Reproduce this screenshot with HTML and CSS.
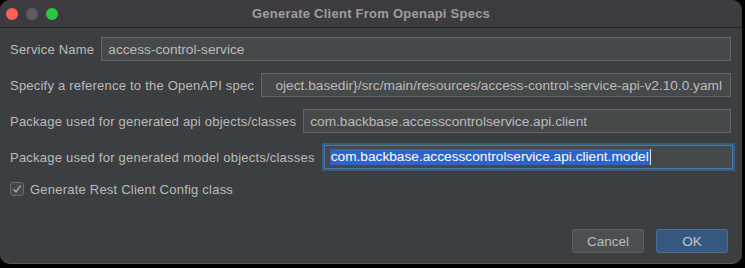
FILE: index.html
```html
<!DOCTYPE html>
<html>
<head>
  <meta charset="UTF-8">
  <title>Generate Client From Openapi Specs</title>
  <link rel="stylesheet" href="styles.css">
</head>
<body>
  <div class="window">
    <div class="titlebar">
      <div class="lights">
        <span class="light red"></span>
        <span class="light grey"></span>
        <span class="light green"></span>
      </div>
      <div class="title">Generate Client From Openapi Specs</div>
      <div></div>
    </div>

    <div class="content">
      <div class="row">
        <label>Service Name</label>
        <div class="field">access-control-service</div>
      </div>

      <div class="row">
        <label>Specify a reference to the OpenAPI spec</label>
        <div class="field scrolled">
          <span>oject.basedir}/src/main/resources/access-control-service-api-v2.10.0.yaml</span>
        </div>
      </div>

      <div class="row">
        <label>Package used for generated api objects/classes</label>
        <div class="field">com.backbase.accesscontrolservice.api.client</div>
      </div>

      <div class="row last">
        <label>Package used for generated model objects/classes</label>
        <div class="field focused">
          <span class="selected">com.backbase.accesscontrolservice.api.client.model</span><span class="caret"></span>
        </div>
      </div>

      <div class="checkbox-row">
        <span class="checkbox">
          <svg width="10" height="10" viewBox="0 0 10 10">
            <path d="M1.5 5.2 L4 7.8 L8.6 1.6" fill="none" stroke="#a8a8a8" stroke-width="1.4"/>
          </svg>
        </span>
        <label>Generate Rest Client Config class</label>
      </div>
    </div>

    <div class="footer">
      <button class="btn">Cancel</button>
      <button class="btn primary">OK</button>
    </div>
  </div>
</body>
</html>
```

FILE: styles.css
```css
body {
  margin: 0;
  background: #000;
  font-family: "Liberation Sans", Arial, sans-serif;
  font-size: 13px;
}
.window {
  width: 742px;
  height: 264px;
  background: #3c3f41;
  border-radius: 10px;
  border-bottom: 1px solid #58595b;
  box-sizing: border-box;
  overflow: hidden;
  display: flex;
  flex-direction: column;
}
.titlebar {
  height: 27px;
  flex-shrink: 0;
  background: #3d3b40;
  border-bottom: 1px solid #202022;
  display: grid;
  grid-template-columns: 1fr auto 1fr;
  align-items: center;
}
.lights {
  display: flex;
  gap: 8px;
  padding-left: 6px;
}
.light {
  width: 12px;
  height: 12px;
  border-radius: 50%;
}
.red { background: #fe5f57; }
.grey { background: #5d5c61; }
.green { background: #28c840; }
.title {
  color: #9e9da2;
  font-weight: bold;
  letter-spacing: 0.25px;
}
.content {
  padding: 9px 11px 0 10px;
}
.row {
  display: flex;
  align-items: center;
  gap: 7px;
  height: 24px;
  margin-bottom: 12px;
}
.row.last {
  margin-bottom: 8px;
}
label {
  color: #bbbbbb;
  white-space: nowrap;
  letter-spacing: 0.22px;
}
.field {
  flex: 1;
  height: 24px;
  box-sizing: border-box;
  border: 1px solid #646464;
  background: #45494a;
  color: #bbbbbb;
  font-size: 13.7px;
  padding: 0 6px;
  display: flex;
  align-items: center;
  white-space: nowrap;
  overflow: hidden;
}
.field.scrolled {
  justify-content: flex-end;
  padding-right: 8px;
}
.field.focused {
  border-color: #4a76a0;
  box-shadow: 0 0 0 2px #385d84;
  margin-left: 2px;
  margin-right: -2px;
  padding-left: 5px;
}
.selected {
  background: #2e63c8;
  color: #ffffff;
  line-height: 16px;
  padding: 0 1px;
}
.caret {
  width: 1px;
  height: 16px;
  background: #e0e0e0;
}
.checkbox-row {
  display: flex;
  align-items: center;
  gap: 6px;
  height: 24px;
}
.checkbox {
  width: 14px;
  height: 14px;
  box-sizing: border-box;
  border: 1px solid #6b6b6b;
  border-radius: 3px;
  background: #43494a;
  display: flex;
  align-items: center;
  justify-content: center;
}
.footer {
  margin-top: auto;
  display: flex;
  justify-content: flex-end;
  gap: 12px;
  padding: 0 14px 10px 0;
}
.btn {
  width: 72px;
  height: 24px;
  border-radius: 3px;
  border: 1px solid #5e6060;
  background: #4c5052;
  color: #bbbbbb;
  font-family: inherit;
  font-size: 13.5px;
  padding: 0;
}
.btn.primary {
  background: #365880;
  border-color: #4c708c;
  color: #c8c8c8;
}
```
